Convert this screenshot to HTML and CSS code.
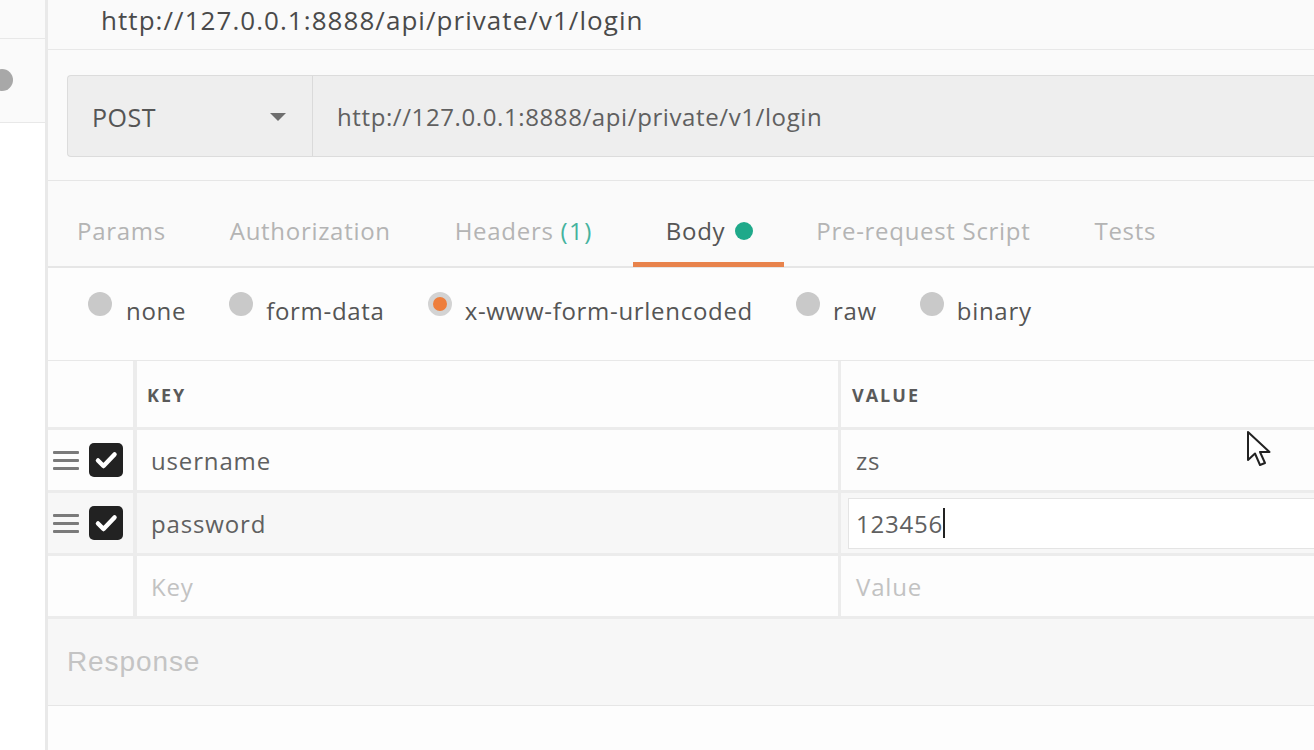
FILE: index.html
```html
<!DOCTYPE html>
<html>
<head>
<meta charset="utf-8">
<link rel="stylesheet" href="styles.css">
</head>
<body>
<div class="app">
  <aside class="sidebar">
    <div class="side-top"></div>
    <div class="side-item"><span class="side-dot"></span></div>
    <div class="side-rest"></div>
  </aside>
  <main class="main">
    <header class="title">http://127.0.0.1:8888/api/private/v1/login</header>
    <section class="urlrow">
      <div class="urlbox">
        <div class="method"><span>POST</span><span class="caret"></span></div>
        <div class="url">http://127.0.0.1:8888/api/private/v1/login</div>
      </div>
    </section>
    <nav class="tabs">
      <span class="tab">Params</span>
      <span class="tab">Authorization</span>
      <span class="tab">Headers <span class="count">(1)</span></span>
      <span class="tab active">Body<span class="dot"></span></span>
      <span class="tab">Pre-request Script</span>
      <span class="tab">Tests</span>
    </nav>
    <div class="radios">
      <label class="radio"><span class="circle"></span>none</label>
      <label class="radio"><span class="circle"></span>form-data</label>
      <label class="radio"><span class="circle on"></span>x-www-form-urlencoded</label>
      <label class="radio"><span class="circle"></span>raw</label>
      <label class="radio"><span class="circle"></span>binary</label>
    </div>
    <div class="table">
      <div class="row head">
        <div class="c0"></div>
        <div class="c1 hd">KEY</div>
        <div class="c2 hd">VALUE</div>
      </div>
      <div class="row">
        <div class="c0"><span class="handle"><i></i><i></i><i></i></span><span class="check"><svg viewBox="0 0 34 34" width="34" height="34"><path d="M9 17.5l5.5 5.5L25.5 11.5" fill="none" stroke="#fff" stroke-width="4.5" stroke-linecap="round" stroke-linejoin="round"/></svg></span></div>
        <div class="c1 txt">username</div>
        <div class="c2 txt">zs</div>
      </div>
      <div class="row hover">
        <div class="c0"><span class="handle"><i></i><i></i><i></i></span><span class="check"><svg viewBox="0 0 34 34" width="34" height="34"><path d="M9 17.5l5.5 5.5L25.5 11.5" fill="none" stroke="#fff" stroke-width="4.5" stroke-linecap="round" stroke-linejoin="round"/></svg></span></div>
        <div class="c1 txt">password</div>
        <div class="c2"><div class="input">123456<span class="caretbar"></span></div></div>
      </div>
      <div class="row">
        <div class="c0"></div>
        <div class="c1 txt ph">Key</div>
        <div class="c2 txt ph">Value</div>
      </div>
    </div>
    <div class="response">Response</div>
    <div class="bottom"></div>
  </main>
</div>
<svg class="pointer" width="30" height="44" viewBox="0 0 30 44"><path d="M2 2 L2 30 L9 23.5 L14 35 L19 33 L14 22 L23.5 22 Z" fill="#fff" stroke="#222" stroke-width="2" stroke-linejoin="round"/></svg>
</body>
</html>
```
FILE: styles.css
```css
html, body { margin: 0; padding: 0; }
body {
  width: 1314px; height: 750px; overflow: hidden;
  font-family: "Open Sans", "Noto Sans", sans-serif;
  background: #fff; color: #555;
  position: relative;
}
.app { display: flex; height: 750px; }
.sidebar {
  width: 45px; flex: none;
  border-right: 3px solid #e9e9e9;
  display: flex; flex-direction: column;
  background: #fff;
}
.side-top { height: 38px; background: #fafafa; border-bottom: 1px solid #e8e8e8; }
.side-item { height: 83px; border-bottom: 1px solid #e8e8e8; background: #fafafa; position: relative; overflow: hidden; }
.side-dot { position: absolute; left: -9px; top: 30px; width: 22px; height: 22px; border-radius: 50%; background: #a8a8a8; }
.side-rest { flex: 1; }

.main { flex: 1; display: flex; flex-direction: column; background: #fafafa; min-width: 0; }
.title {
  height: 50px; flex: none; box-sizing: border-box; border-bottom: 1px solid #e8e8e8;
  padding-left: 53px; font-size: 26px; letter-spacing: 1.05px; line-height: 40px; color: #4a4a4a;
  white-space: nowrap;
}
.urlrow { padding: 25px 0 0 19px; height: 131px; flex: none; box-sizing: border-box; border-bottom: 1px solid #e6e6e6; }
.urlbox {
  display: flex; height: 82px; box-sizing: border-box;
  background: #eeeeee; border: 1px solid #dcdcdc; border-right: none;
  border-radius: 4px 0 0 4px;
}
.method {
  width: 245px; flex: none; box-sizing: border-box; border-right: 1px solid #dadada;
  display: flex; align-items: center; justify-content: space-between;
  padding: 2px 26px 0 24px; font-size: 25px; letter-spacing: 0.5px; color: #555;
}
.caret { width: 0; height: 0; border-left: 8px solid transparent; border-right: 8px solid transparent; border-top: 8px solid #6e6e6e; }
.url { display: flex; align-items: center; padding-left: 24px; font-size: 24px; letter-spacing: 0.6px; color: #606060; white-space: nowrap; }

.tabs {
  height: 87px; flex: none; box-sizing: border-box; border-bottom: 2px solid #e6e6e6;
  display: flex; align-items: stretch; padding-left: 29px;
}
.tab {
  display: flex; align-items: center; padding: 18px 32px 0; font-size: 24px; letter-spacing: 0.7px; color: #b4b4b4;
  border-bottom: 5px solid transparent; margin-bottom: -1px; white-space: pre;
}
.tab:first-child { padding-left: 0; }
.tab .count { color: #45b39e; letter-spacing: 1.5px; }
.tab.active { color: #555; border-bottom-color: #e8834c; margin-left: 8px; padding-left: 33px; padding-right: 31px; }
.dot { width: 18px; height: 18px; border-radius: 50%; background: #1fa98a; margin-left: 10px; }

.radios {
  height: 92px; flex: none; box-sizing: border-box; background: #fdfdfd;
  display: flex; align-items: center; padding-left: 40px;
}
.radio { display: flex; align-items: center; font-size: 24px; letter-spacing: 0.7px; color: #555; margin-right: 43px; padding-bottom: 8px; }
.circle {
  width: 24px; height: 24px; border-radius: 50%; background: #c9c9c9; margin-right: 13px;
  position: relative; top: -6px; box-sizing: border-box;
}
.radio:first-child .circle { margin-right: 14px; }
.circle.on { background: #ee7e3c; border: 5px solid #d3d3d3; }

.table { border-top: 1px solid #e8e8e8; background: #fdfdfd; flex: none; }
.row { display: flex; height: 60px; border-bottom: 3px solid #ececec; }
.row.head { height: 66px; }
.row.hover { background: #f7f7f7; }
.c0 { width: 89px; flex: none; border-right: 4px solid #ececec; display: flex; align-items: center; padding-left: 5px; box-sizing: border-box; }
.c1 { width: 704px; flex: none; border-right: 3px solid #ececec; display: flex; align-items: center; box-sizing: border-box; }
.c2 { flex: 1; display: flex; align-items: center; }
.hd { font-size: 18px; font-weight: 700; letter-spacing: 2px; color: #5a5a5a; padding-left: 10px; padding-top: 2px; }
.c2.hd { padding-left: 11px; }
.txt { font-size: 24px; letter-spacing: 0.85px; color: #606060; padding-left: 14px; }
.c2.txt { padding-left: 15px; }
.ph { color: #c2c2c2; }
.handle { display: flex; flex-direction: column; gap: 5px; width: 26px; margin-right: 10px; }
.handle i { display: block; height: 3px; background: #7a7a7a; border-radius: 1px; }
.check { width: 34px; height: 34px; background: #222; border-radius: 5px; display: block; }
.check svg { display: block; }
.input {
  flex: 1; height: 51px; margin-left: 7px; box-sizing: border-box;
  background: #fff; border: 1px solid #e4e4e4; border-right: none;
  display: flex; align-items: center; padding-left: 7px; font-size: 24px; letter-spacing: 0.8px; color: #606060;
}
.caretbar { display: inline-block; width: 2px; height: 30px; background: #222; margin-left: 0; }
.response {
  height: 87px; flex: none; box-sizing: border-box; background: #f7f7f7; border-bottom: 1px solid #e6e6e6;
  display: flex; align-items: center; padding-left: 19px;
  font-family: "Liberation Sans", Arial, sans-serif; font-size: 28px; letter-spacing: 0.9px; color: #c4c4c4;
}
.bottom { flex: 1; background: #fdfdfd; }
.pointer { position: absolute; left: 1246px; top: 430px; }
```
